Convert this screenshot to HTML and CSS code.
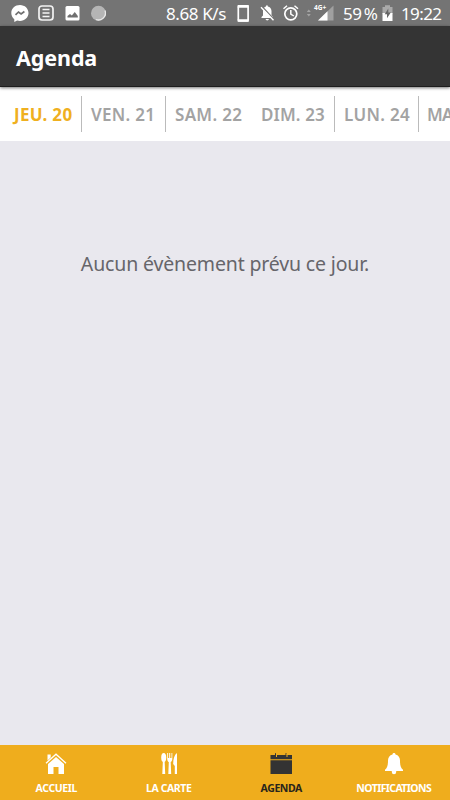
FILE: index.html
```html
<!DOCTYPE html>
<html lang="fr">
<head>
<meta charset="utf-8">
<title>Agenda</title>
<link rel="stylesheet" href="styles.css">
</head>
<body>
<div class="app">
  <div class="status">
    <svg class="icons-left" width="100" height="26" viewBox="8 0 100 26">
      <path fill="#fff" d="M20 5c-5 0-8.700 3.500-8.700 8 0 2.600 1.200 4.700 3 6.200V22l2.800-1.500c.9.300 1.900.400 2.900.400 4.800 0 8.500-3.500 8.500-7.900S24.800 5 20 5z"/>
      <path fill="none" stroke="#707070" stroke-width="1.700" d="M15.500 14.800l3-2.800 2.600 2 3.300-2.500"/>
      <rect x="39" y="6" width="14" height="14" rx="3" fill="none" stroke="#f2f2f2" stroke-width="1.700"/>
      <path stroke="#f4f4f4" stroke-width="1.400" d="M42.500 9.500h7M42.500 13h7M42.500 16.500h7"/>
      <rect x="65.500" y="6" width="14" height="14.500" rx="1.500" fill="#fff"/>
      <path fill="#707070" d="M67.500 17.500v-1.500l2.500-2 1.800 1.500 3-3.500 3 4v1.500z"/>
      <circle cx="98.500" cy="13.200" r="7.500" fill="#b5b5b5"/>
      <path fill="none" stroke="#e8e8e8" stroke-width="1.300" d="M105 10.500a7 7 0 0 1-9 9"/>
    </svg>
    <span class="speed">8.68 K/s</span>
    <svg class="icons-right" width="100" height="26" viewBox="235 0 100 26">
      <rect x="238.300" y="5.800" width="9.800" height="15.200" rx="1" fill="none" stroke="#fff" stroke-width="1.700"/>
      <path stroke="#fff" stroke-width="2.700" d="M237.700 6.300h11M237.700 20.500h11"/>
      <path fill="#fff" d="M261.500 18v-1l1.500-1.500V11c0-2.500 1.300-4 3-4.500V5.500h1.800v1c2.200.500 3.700 2.300 3.700 4.500v4.500L273 17v1zM265.500 19h3.500a1.800 1.800 0 0 1-3.500 0z"/>
      <path stroke="#747474" stroke-width="1.500" d="M262 6.500l12 13"/>
      <path stroke="#fff" stroke-width="1.400" d="M261 7.300l12.500 13"/>
      <circle cx="290.800" cy="13.800" r="6" fill="none" stroke="#fff" stroke-width="1.700"/>
      <path fill="none" stroke="#fff" stroke-width="1.500" d="M290.800 10v4l3 2M283.500 8.700l3.500-3M298 8.700l-3.500-3"/>
      <path fill="#a4a4a4" d="M306.800 12l2-2.500 2 2.500zM306.800 14l2 2.500 2-2.500z"/>
      <path fill="#a0a0a0" d="M333.500 5.500v15H318z"/>
      <path fill="#fff" d="M327.500 11.300v9.200H318z"/>
      <text class="network" x="314" y="10">4G+</text>
    </svg>
    <span class="percent">59 %</span>
    <svg class="battery" width="12" height="26" viewBox="381 0 12 26">
      <path fill="#aaa" d="M382.500 7h2.500V5.200h5V7h2.500v7h-10z"/>
      <path fill="#fff" d="M382.500 13h10v8h-10z"/>
      <path fill="#666" d="M388.300 8.500l-3.600 5.700h2.300v4l3.800-5.700h-2.500z"/>
    </svg>
    <span class="clock">19:22</span>
  </div>
  <header class="header"><h1>Agenda</h1></header>
  <nav class="days">
    <span class="day active"><b>JEU. 20</b></span>
    <span class="day"><b>VEN. 21</b></span>
    <span class="day plain"><b>SAM. 22</b></span>
    <span class="day sunday"><b>DIM. 23</b></span>
    <span class="day"><b>LUN. 24</b></span>
    <span class="day plain last"><b>MA</b></span>
  </nav>
  <main class="content"><p>Aucun évènement prévu ce jour.</p></main>
  <nav class="tabs">
    <a class="tab">
      <svg width="24" height="24" viewBox="0 0 24 24" fill="#fff"><path d="M3.500 2.500h3.200v3L3.500 8.500zM12 5l-8 7V22h5.500v-7h5v7H20V12z"/><path d="M2 11.200l10-9 10 9" fill="none" stroke="#fff" stroke-width="1.300"/></svg>
      <span>ACCUEIL</span>
    </a>
    <a class="tab">
      <svg width="24" height="24" viewBox="0 0 24 24" fill="#fff"><ellipse cx="6.700" cy="5.500" rx="2.500" ry="4.500"/><path d="M5.900 8h1.700l.6 14H5.300zM11.900 8h1.700l.6 14h-2.900zM20 1v21h-2.200v-8l-1.600-2c0-5 1-9 3.800-11z"/><path d="M10.200 1v6c0 2 1.200 3.300 2.500 3.300S15.300 9 15.300 7V1h-.8v5h-1.300V1h-1v5h-1.100V1z"/></svg>
      <span>LA CARTE</span>
    </a>
    <a class="tab current">
      <svg width="24" height="24" viewBox="0 0 24 24" fill="#333"><path d="M1.500 3h21.500v4.200H1.500zM1.500 8.200h21.500V22H1.500z"/><path d="M6.500 1.200V4M17 1.200V4" stroke="#333" fill="none"/><path d="M7.500 2v3M18 2v3" stroke="#efad1d" fill="none"/></svg>
      <span>AGENDA</span>
    </a>
    <a class="tab">
      <svg width="24" height="24" viewBox="0 0 24 24" fill="#fff"><path d="M12 1c-.9 0-1.500.6-1.500 1.400C7.500 3 6 5.500 6 8.500c0 5-.8 7.300-3 9.300V19h18v-1.200c-2.200-2-3-4.300-3-9.300 0-3-1.500-5.500-4.500-6.100C13.500 1.600 12.900 1 12 1zM9.800 19h4.400v1a2.200 2.200 0 0 1-4.400 0z"/></svg>
      <span class="notif">NOTIFICATIONS</span>
    </a>
  </nav>
</div>
</body>
</html>
```
FILE: styles.css
```css
* { box-sizing: border-box; }
body { margin: 0; font-family: "Noto Sans", sans-serif; }
.app { width: 450px; height: 800px; display: flex; flex-direction: column; overflow: hidden; background: #e9e8ee; }
.status { height: 26px; flex: none; background: #747474; color: #fff; display: flex; align-items: center; padding-left: 8px; font-size: 17px; line-height: 26px; white-space: nowrap; }
.status svg { flex: none; }
.status span { flex: none; padding-top: 1px; }
.speed { margin-left: 58px; width: 69px; letter-spacing: -0.4px; }
.network { font-size: 6.500px; font-weight: 700; fill: #fff; }
.percent { margin-left: 8px; width: 38px; letter-spacing: -0.4px; word-spacing: -2px; }
.clock { margin-left: 8px; letter-spacing: -0.6px; }
.header { height: 61px; flex: none; background: #343434; border-bottom: 1px solid #1d1d1d; box-shadow: 0 1px 3px #0008; padding-left: 16px; z-index: 1; }
h1 { margin: 0; color: #fff; font-size: 21.500px; line-height: 63px; font-weight: 700; letter-spacing: -0.1px; }
.days { height: 54px; flex: none; background: #fff; display: flex; padding: 9px 0 9px 5px; color: #a3a3a3; }
.day { flex: none; width: 84px; height: 36px; border-right: 1px solid #bbb; padding-left: 9px; font-size: 17px; line-height: 38px; white-space: nowrap; letter-spacing: 0.3px; }
.day:first-child { width: 77px; }
.day b { font-weight: 600; }
.day.active { color: #efb01f; }
.day.active b { font-weight: 700; }
.day.plain { border: 0; width: 86px; }
.day.sunday { width: 83px; letter-spacing: 0.1px; }
.day.last { width: 31px; padding-left: 8px; letter-spacing: -0.8px; overflow: hidden; }
.content { flex: 1; color: #66656a; text-align: center; font-size: 19.500px; letter-spacing: -0.15px; padding-top: 109px; }
.content p { margin: 0; line-height: 28px; white-space: nowrap; }
.tabs { height: 55px; flex: none; display: flex; background: #efad1d; }
.tab { flex: 1 1 0; display: flex; flex-direction: column; align-items: center; padding-top: 7px; color: #fff; font-size: 10.500px; font-weight: 700; line-height: 14px; letter-spacing: -0.4px; }
.tab span { margin-top: 5px; white-space: nowrap; }
.tab .notif { letter-spacing: -0.6px; }
.tab.current { color: #29251c; }
```
